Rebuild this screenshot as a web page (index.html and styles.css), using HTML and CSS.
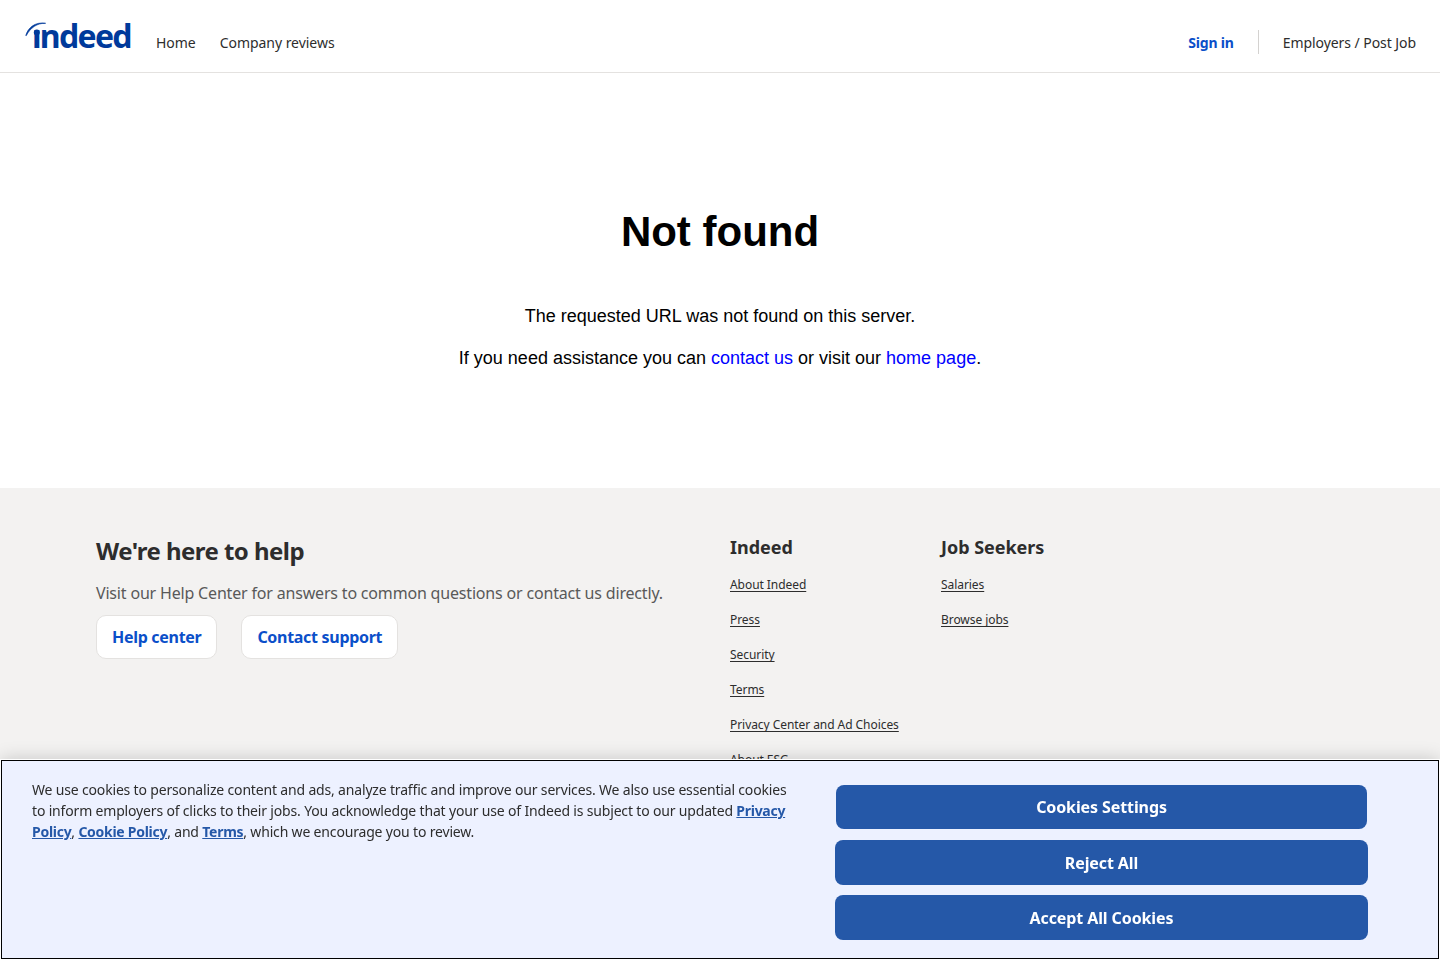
FILE: index.html
```html
<!DOCTYPE html>
<html lang="en">
<head>
<meta charset="utf-8">
<title>Not found | Indeed</title>
<link rel="stylesheet" href="styles.css">
</head>
<body>
<header class="site-header">
  <a class="logo" href="#">
    <svg class="logo-arc" viewBox="0 0 26 20" width="26" height="20" aria-hidden="true"><path d="M.8 14.500C3 6.500 10.500 .6 20.600 2.300 12.500 1.900 5.500 6.500 1.300 14.600Z" fill="#003a9b" stroke="#003a9b" stroke-width=".7" stroke-linejoin="round"/><circle cx="11.800" cy="11.500" r="3" fill="#003a9b"/></svg>
    <span class="logo-text">ındeed</span>
  </a>
  <nav class="nav-main">
    <a href="#">Home</a>
    <a href="#">Company reviews</a>
  </nav>
  <nav class="nav-side">
    <a class="sign-in" href="#">Sign in</a>
    <span class="nav-divider"></span>
    <a href="#">Employers / Post Job</a>
  </nav>
</header>
<main class="error">
  <h1>Not found</h1>
  <p>The requested URL was not found on this server.</p>
  <p>If you need assistance you can <a href="#">contact us</a> or visit our <a href="#">home page</a>.</p>
</main>
<footer class="site-footer">
  <section class="help">
    <h2>We're here to help</h2>
    <p>Visit our Help Center for answers to common questions or contact us directly.</p>
    <div class="help-buttons">
      <a class="help-button" href="#">Help center</a>
      <a class="help-button" href="#">Contact support</a>
    </div>
  </section>
  <section class="links links-indeed">
    <h3>Indeed</h3>
    <ul>
      <li><a href="#">About Indeed</a></li>
      <li><a href="#">Press</a></li>
      <li><a href="#">Security</a></li>
      <li><a href="#">Terms</a></li>
      <li><a href="#">Privacy Center and Ad Choices</a></li>
      <li><a href="#">About ESG</a></li>
    </ul>
  </section>
  <section class="links">
    <h3>Job Seekers</h3>
    <ul>
      <li><a href="#">Salaries</a></li>
      <li><a href="#">Browse jobs</a></li>
    </ul>
  </section>
</footer>
<aside class="cookie-banner">
  <p class="cookie-text">We use cookies to personalize content and ads, analyze traffic and improve our services. We also use essential cookies to inform employers of clicks to their jobs. You acknowledge that your use of Indeed is subject to our updated <a href="#">Privacy Policy</a>, <a href="#">Cookie Policy</a>, and <a href="#">Terms</a>, which we encourage you to review.</p>
  <div class="cookie-actions">
    <button class="cookie-button cookie-button-settings">Cookies Settings</button>
    <button class="cookie-button">Reject All</button>
    <button class="cookie-button">Accept All Cookies</button>
  </div>
</aside>
</body>
</html>
```
FILE: styles.css
```css
* { box-sizing: border-box; }
html, body { margin: 0; height: 960px; overflow: hidden; }
body { font-family: "Noto Sans", sans-serif; background: #fff; color: #2d2d2d; }
a { color: inherit; }

.site-header { height: 73px; border-bottom: 1px solid #e4e2e0; display: flex; align-items: center; padding: 12px 24px 0 25px; background: #fff; }
.logo { position: relative; width: 107px; height: 36px; margin-top: -12px; text-decoration: none; display: block; }
.logo-arc { position: absolute; left: 0; top: 3px; }
.logo-text { position: absolute; left: 7px; top: -2px; font: 700 32px/40px "Noto Sans", sans-serif; letter-spacing: -1.7px; color: #003a9b; }
.nav-main { display: flex; gap: 24px; margin-left: 24px; font-size: 14px; letter-spacing: -.04px; }
.nav-main a, .nav-side a { text-decoration: none; }
.nav-side { display: flex; align-items: center; margin-left: auto; font-size: 14px; letter-spacing: -.06px; }
.sign-in { color: #0b4fc9; font-weight: 700; letter-spacing: -.2px; }
.nav-divider { width: 1px; height: 24px; background: #d4d2d0; margin: 0 24px; }

.error { height: 415px; text-align: center; font-family: "Liberation Sans", Arial, sans-serif; color: #000; font-size: 18px; padding-top: 132px; }
.error h1 { font-size: 42px; line-height: 54px; margin: 0 0 47px; }
.error p { margin: 0 0 21px; line-height: 21px; }
.error a { color: #00f; text-decoration: none; }

.site-footer { height: 472px; background: #f3f2f1; display: flex; padding: 45px 96px 0; }
.help { width: 634px; }
.help h2 { margin: 0; font-size: 24px; line-height: 36px; font-weight: 700; letter-spacing: -.55px; }
.help p { margin: 12px 0 0; font-size: 16px; line-height: 24px; color: #595959; letter-spacing: -.18px; }
.help-buttons { display: flex; gap: 24px; margin-top: 10px; }
.help-button { height: 44px; padding: 0 15px; display: flex; align-items: center; background: #fff; border: 1px solid #e4e2e0; border-radius: 10px; color: #0b4fc9; font-weight: 700; font-size: 16px; letter-spacing: -.3px; text-decoration: none; }
.links { font-size: 12px; letter-spacing: -.06px; }
.links-indeed { width: 211px; }
.links h3 { margin: 0 0 13px; font-size: 18px; line-height: 28px; font-weight: 700; letter-spacing: -.03px; }
.links ul { list-style: none; margin: 0; padding: 0; display: flex; flex-direction: column; gap: 14px; }
.links li { line-height: 21px; }
.links a { text-underline-offset: 2px; text-decoration-skip-ink: none; }

.cookie-banner { position: fixed; left: 1px; right: 1px; bottom: 1px; height: 199px; background: #edf1ff; border: 1px solid #000; outline: 1px solid #fff; box-shadow: 0 0 18px rgba(0,0,0,.2); display: flex; padding: 19px 70px 18px 30px; }
.cookie-text { width: 762px; margin: -1px 0 0; font-size: 14px; line-height: 21px; color: #2d2d2d; letter-spacing: -.17px; }
.cookie-text a { color: #2558a8; font-weight: 700; letter-spacing: -.28px; }
.cookie-actions { width: 533px; margin-left: auto; display: flex; flex-direction: column; gap: 10px; padding-top: 1px; }
.cookie-button { height: 45px; border: 0; border-radius: 8px; background: #2558a8; color: #fff; font: 700 16px "Noto Sans", sans-serif; letter-spacing: -.1px; }
.cookie-button-settings { width: 531px; height: 44px; margin: 4px 1px 1px; }
```
